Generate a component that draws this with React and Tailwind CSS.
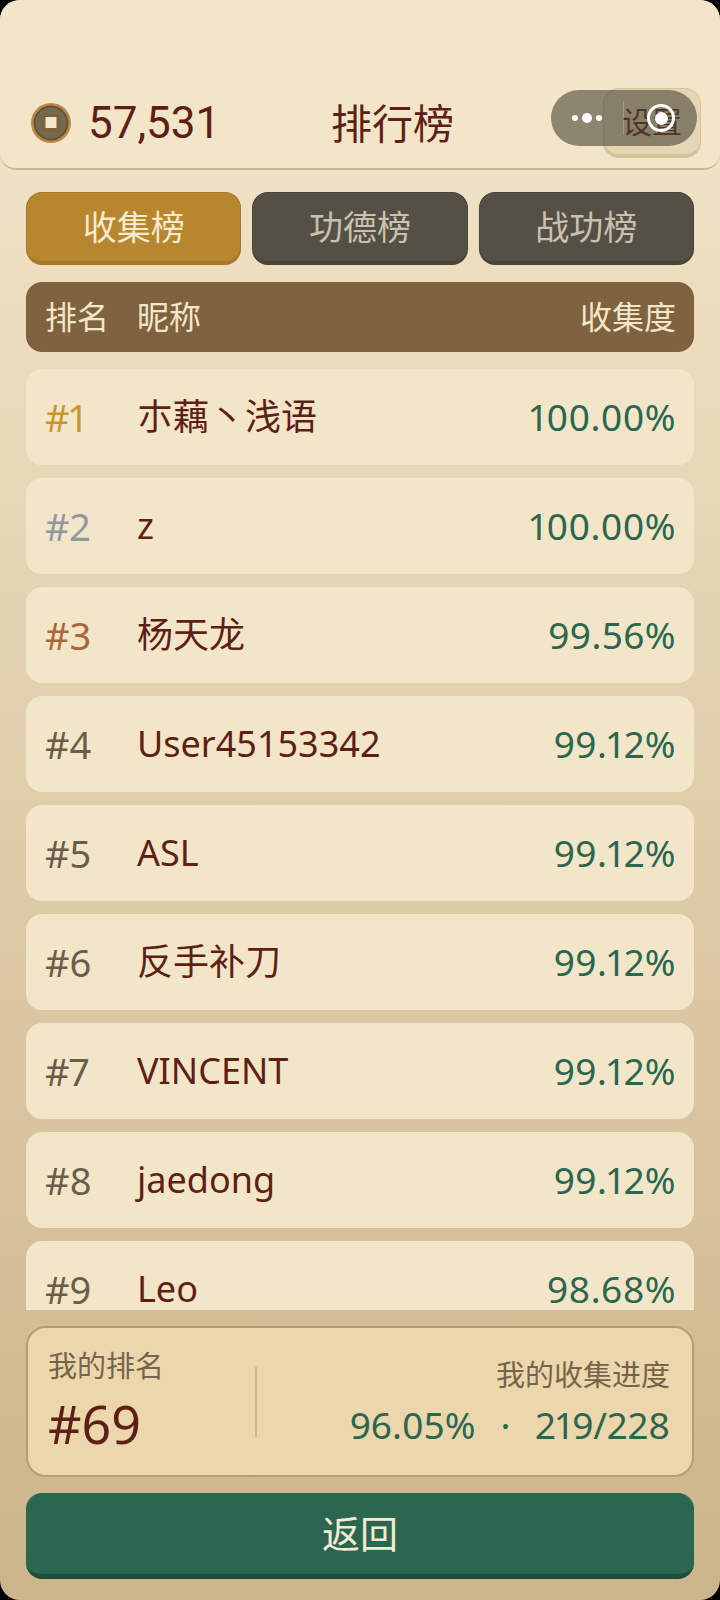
import React from 'react';

const ROWS = [
  { rank: 1, name: '朩藕丶浅语', pct: '100.00%', color: 'text-[#c8962e]' },
  { rank: 2, name: 'z', pct: '100.00%', color: 'text-[#8f98a3]' },
  { rank: 3, name: '杨天龙', pct: '99.56%', color: 'text-[#a9683a]' },
  { rank: 4, name: 'User45153342', pct: '99.12%', color: 'text-[#6b5d4d]' },
  { rank: 5, name: 'ASL', pct: '99.12%', color: 'text-[#6b5d4d]' },
  { rank: 6, name: '反手补刀', pct: '99.12%', color: 'text-[#6b5d4d]' },
  { rank: 7, name: 'VINCENT', pct: '99.12%', color: 'text-[#6b5d4d]' },
  { rank: 8, name: 'jaedong', pct: '99.12%', color: 'text-[#6b5d4d]' },
  { rank: 9, name: 'Leo', pct: '98.68%', color: 'text-[#6b5d4d]' },
];

const FONT = "font-['Noto_Sans','Noto_Sans_CJK_SC',sans-serif]";

const Coin = () => (
  <svg width="42" height="42" viewBox="0 0 42 42" className="shrink-0">
    <circle cx="21" cy="21" r="20" fill="#b98a4c" />
    <circle cx="21" cy="21" r="17.5" fill="#6d5230" />
    <circle cx="21" cy="21" r="15.5" fill="#6f6c53" />
    <rect x="12" y="12" width="18" height="18" fill="#7f6238" />
    <rect x="15.5" y="15" width="11" height="11" fill="#f3e7cc" />
  </svg>
);

const Tab = ({ label, active }) => (
  <div
    className={
      active
        ? 'flex-1 h-[73px] flex items-center justify-center rounded-2xl border border-[#a9742b] border-b-4 bg-[#b8862f] text-[34px] text-[#f6ead0]'
        : 'flex-1 h-[73px] flex items-center justify-center rounded-2xl border border-[#4a443a] border-b-4 bg-[#555045] text-[34px] text-[#c9c1ae]'
    }
  >
    {label}
  </div>
);

const Row = ({ rank, name, pct, color }) => (
  <div className="h-[96px] shrink-0 flex items-center rounded-2xl bg-[#f3e6c8] pl-[19px] pr-[18px]">
    <span className={`w-[92px] text-[38px] proportional-nums ${color}`}>#{rank}</span>
    <span className="flex-1 text-[36px] text-[#5e1f17]">{name}</span>
    <span className="tracking-[0.4px] text-[37px] proportional-nums text-[#2b6650]">{pct}</span>
  </div>
);

const App = () => {
  return (
    <div className={`relative w-[720px] h-[1600px] overflow-hidden bg-black ${FONT}`}>
      <div className="h-full flex flex-col rounded-[20px] overflow-hidden bg-gradient-to-b from-[#f3e6ca] to-[#ccb58b]">
        {/* top bar */}
        <div className="relative h-[170px] shrink-0 flex items-end pl-[30px] pr-[19px] pb-[10px] rounded-b-2xl border-b-2 border-[#cbb893] bg-[#f2e5c8]">
          <div className="h-[70px] flex items-center w-full">
            <Coin />
            <span className="ml-[16px] w-[130px] font-['Roboto','Noto_Sans_CJK_SC',sans-serif] text-[44px] leading-[52px] text-[#5e1f17]">57,531</span>
            <span className="ml-[113px] text-[41px] leading-[52px] text-[#5e1f17]">排行榜</span>
            <div className="ml-auto w-[98px] h-[70px] rounded-2xl border border-[#d3c19c] border-b-4 bg-[#e6d7b4] flex items-center justify-center text-[30px] text-[#5e1f17]">
              设置
            </div>
          </div>
          {/* floating capsule over the page */}
          <div className="absolute left-[551px] top-[90px] w-[146px] h-[56px] rounded-full bg-[#4a4436]/60 flex items-center">
            <div className="w-[52px] ml-[10px] flex items-center justify-center gap-[4px]">
              <span className="w-[6px] h-[6px] rounded-full bg-white" />
              <span className="w-[10px] h-[10px] rounded-full bg-white" />
              <span className="w-[6px] h-[6px] rounded-full bg-white" />
            </div>
            <span className="absolute left-[72px] top-[11px] h-[34px] w-px bg-white/20" />
            <span className="absolute left-[96px] top-[14px] w-[28px] h-[28px] rounded-full border-[3px] border-white flex items-center justify-center">
              <span className="w-[13px] h-[13px] rounded-full bg-white" />
            </span>
          </div>
        </div>

        <div className="flex-1 flex flex-col min-h-0 px-[26px] pt-[22px]">
          {/* board switcher */}
          <div className="flex gap-[11px] shrink-0">
            <Tab label="收集榜" active />
            <Tab label="功德榜" />
            <Tab label="战功榜" />
          </div>

          {/* column titles */}
          <div className="mt-[17px] h-[70px] shrink-0 flex items-center rounded-2xl bg-[#7f6240] pl-[19px] pr-[18px] text-[32px] text-[#f3e6c8]">
            <span className="w-[92px]">排名</span>
            <span className="flex-1">昵称</span>
            <span>收集度</span>
          </div>

          {/* scrolling list, cut off by the footer */}
          <div className="mt-[17px] h-[941px] shrink-0 overflow-hidden flex flex-col gap-[13px]">
            {ROWS.map((row) => (
              <Row key={row.rank} {...row} />
            ))}
          </div>

          {/* own rank */}
          <div className="mt-[16px] h-[151px] shrink-0 flex rounded-[20px] border-2 border-[#b49d74] bg-[#ecd7ad] pl-[20px] pr-[22px]">
            <div className="w-[207px] shrink-0 pt-[18px]">
              <div className="text-[29px] leading-[40px] text-[#75634a]">我的排名</div>
              <div className="mt-[7px] text-[52px] leading-[62px] text-[#5e1f17]">#69</div>
            </div>
            <div className="mt-[39px] w-[2px] h-[70px] bg-[#cfba90]" />
            <div className="flex-1 flex flex-col items-end pt-[27px]">
              <div className="text-[29px] leading-[40px] text-[#75634a]">我的收集进度</div>
              <div className="mt-[5px] flex items-center text-[37px] leading-[50px] proportional-nums text-[#2b6650]">
                <span>96.05%</span>
                <span className="mx-[25px]">·</span>
                <span>219/228</span>
              </div>
            </div>
          </div>

          {/* back */}
          <div className="mt-[16px] h-[86px] shrink-0 flex items-center justify-center rounded-2xl border-b-[5px] border-[#1f4d3c] bg-[#2b6650] text-[38px] text-[#f6ead0]">
            返回
          </div>
        </div>
      </div>
    </div>
  );
};

export default App;
